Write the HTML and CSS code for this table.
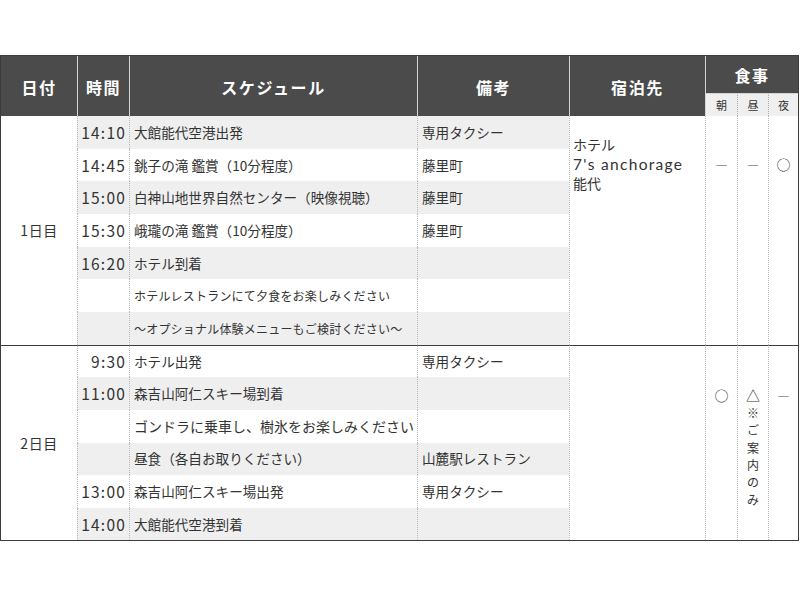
FILE: index.html
```html
<!DOCTYPE html>
<html lang="ja">
<head>
<meta charset="utf-8">
<title>スケジュール</title>
<link rel="stylesheet" href="styles.css">
</head>
<body>
<table class="sched">
  <colgroup>
    <col class="c-date"><col class="c-time"><col class="c-act"><col class="c-note"><col class="c-hotel"><col class="c-meal"><col class="c-meal2"><col class="c-meal3">
  </colgroup>
  <thead>
    <tr class="h1">
      <th rowspan="2" class="first">日付</th>
      <th rowspan="2">時間</th>
      <th rowspan="2">スケジュール</th>
      <th rowspan="2">備考</th>
      <th rowspan="2">宿泊先</th>
      <th colspan="3" class="meal-top">食事</th>
    </tr>
    <tr class="h2">
      <th class="sub sub-first">朝</th>
      <th class="sub">昼</th>
      <th class="sub">夜</th>
    </tr>
  </thead>
  <tbody class="day1">
    <tr class="alt">
      <td rowspan="7" class="date">1日目</td>
      <td class="time">14:10</td>
      <td class="act">大館能代空港出発</td>
      <td class="note">専用タクシー</td>
      <td rowspan="7" class="hotel">ホテル<br><span class="latin">7's anchorage</span><br>能代</td>
      <td rowspan="7" class="meal m1"><span class="dash">－</span></td>
      <td rowspan="7" class="meal m1"><span class="dash">－</span></td>
      <td rowspan="7" class="meal m1">○</td>
    </tr>
    <tr>
      <td class="time">14:45</td>
      <td class="act">銚子の滝 鑑賞（10分程度）</td>
      <td class="note">藤里町</td>
    </tr>
    <tr class="alt">
      <td class="time">15:00</td>
      <td class="act">白神山地世界自然センター（映像視聴）</td>
      <td class="note">藤里町</td>
    </tr>
    <tr>
      <td class="time">15:30</td>
      <td class="act">峨瓏の滝 鑑賞（10分程度）</td>
      <td class="note">藤里町</td>
    </tr>
    <tr class="alt">
      <td class="time">16:20</td>
      <td class="act">ホテル到着</td>
      <td class="note"></td>
    </tr>
    <tr>
      <td class="time"></td>
      <td class="act small">ホテルレストランにて夕食をお楽しみください</td>
      <td class="note"></td>
    </tr>
    <tr class="alt">
      <td class="time"></td>
      <td class="act small">～オプショナル体験メニューもご検討ください～</td>
      <td class="note"></td>
    </tr>
  </tbody>
  <tbody class="day2">
    <tr>
      <td rowspan="6" class="date">2日目</td>
      <td class="time">9:30</td>
      <td class="act">ホテル出発</td>
      <td class="note">専用タクシー</td>
      <td rowspan="6" class="hotel"></td>
      <td rowspan="6" class="meal m2">○</td>
      <td rowspan="6" class="meal m2 lunch">△<span class="v">※</span><span class="v">ご</span><span class="v">案</span><span class="v">内</span><span class="v">の</span><span class="v">み</span></td>
      <td rowspan="6" class="meal m2"><span class="dash">－</span></td>
    </tr>
    <tr class="alt">
      <td class="time">11:00</td>
      <td class="act">森吉山阿仁スキー場到着</td>
      <td class="note"></td>
    </tr>
    <tr>
      <td class="time"></td>
      <td class="act wide">ゴンドラに乗車し、樹氷をお楽しみください</td>
      <td class="note"></td>
    </tr>
    <tr class="alt">
      <td class="time"></td>
      <td class="act">昼食（各自お取りください）</td>
      <td class="note">山麓駅レストラン</td>
    </tr>
    <tr>
      <td class="time">13:00</td>
      <td class="act">森吉山阿仁スキー場出発</td>
      <td class="note">専用タクシー</td>
    </tr>
    <tr class="alt">
      <td class="time">14:00</td>
      <td class="act">大館能代空港到着</td>
      <td class="note"></td>
    </tr>
  </tbody>
</table>
</body>
</html>
```
FILE: styles.css
```css
html, body {
  margin: 0;
  padding: 0;
  background: #ffffff;
}

body {
  font-family: "Noto Sans CJK JP", "Noto Sans", sans-serif;
  color: #333333;
}

.sched {
  margin-top: 55px;
  width: 799px;
  table-layout: fixed;
  border-collapse: separate;
  border-spacing: 0;
  border: 1px solid #3c3c3c;
}

.c-date { width: 76px; }
.c-time { width: 52px; }
.c-act { width: 288px; }
.c-note { width: 152px; }
.c-hotel { width: 136px; }
.c-meal { width: 32px; }
.c-meal2 { width: 31px; }
.c-meal3 { width: 30px; }

th {
  background: #4b4b4b;
  color: #ffffff;
  font-weight: bold;
  font-size: 16px;
  letter-spacing: 1.6px;
  border-left: 1px solid #d4d4d4;
  padding: 0;
  text-align: center;
  vertical-align: middle;
}

th.first { border-left: none; }

.h1 { height: 37px; }
.h1 th { padding-top: 2px; }
.h1 .meal-top { vertical-align: middle; padding-top: 1px; }

.h2 { height: 23px; }

th.sub {
  background: #efefef;
  color: #333333;
  font-size: 11px;
  font-weight: normal;
  letter-spacing: 0;
  border-top: 1px solid #d4d4d4;
  border-left: 1px dotted #a8a8a8;
}

th.sub-first { border-left: 1px solid #d4d4d4; }

td {
  padding: 0;
  font-size: 13.6px;
  line-height: 17px;
  border-left: 1px dotted #b8b8b8;
  vertical-align: middle;
  white-space: nowrap;
}

.day1 tr { height: 32.7px; }
.day2 tr { height: 32.6px; }

.day2 tr:first-child td { border-top: 1px solid #3c3c3c; }

td.date {
  border-left: none;
  text-align: center;
  font-size: 14px;
  letter-spacing: 0.5px;
}

td.time {
  text-align: right;
  padding-right: 3px;
  font-size: 15.5px;
  letter-spacing: 1.2px;
}

td.act { padding-left: 4px; }
td.act.small { font-size: 12px; letter-spacing: 0.2px; }
td.act.wide { font-size: 14px; letter-spacing: 0; }

td.note { padding-left: 4px; }

.alt td.time,
.alt td.act,
.alt td.note {
  background: #efefef;
}

td.hotel {
  vertical-align: top;
  padding: 19px 0 0 3px;
  font-size: 14px;
  line-height: 19.5px;
}

.latin {
  font-family: Lato, "Noto Sans", sans-serif;
  font-size: 15.5px;
  letter-spacing: 1.3px;
}

td.meal {
  vertical-align: top;
  text-align: center;
  font-size: 14px;
  line-height: 17.3px;
}

td.m1 { padding-top: 40px; }
td.m2 { padding-top: 41px; }

.lunch .v {
  display: block;
  font-size: 12px;
  line-height: 17.3px;
}

.dash { color: #9a9a9a; }
```
